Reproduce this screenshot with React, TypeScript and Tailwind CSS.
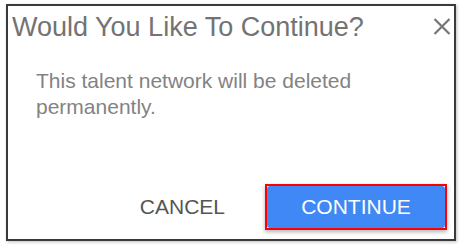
import React from "react";

export default function App() {
  return (
    <div className="w-[462px] h-[247px] bg-white overflow-hidden pt-[4px] pl-[6px]" style={{ fontFamily: '"Liberation Sans", Arial, sans-serif' }}>
      <div className="w-[450px] h-[237px] border-2 border-[#3a3a3a] bg-white flex flex-col shadow-[1px_1px_3px_rgba(0,0,0,0.25)]">
        <div className="flex justify-between items-start pt-[6px] pl-[4px] pr-[2px]">
          <h1 className="text-[27px] leading-[30px] text-[#737373]">Would You Like To Continue?</h1>
          <button className="mt-[5px] w-[20px] h-[18px] flex items-center justify-center">
            <svg width="18" height="17" viewBox="0 0 18 17">
              <path d="M1.5 1 L16.5 16 M16.5 1 L1.5 16" stroke="#767676" strokeWidth="2.2" fill="none" />
            </svg>
          </button>
        </div>
        <p className="mt-[26px] pl-[28px] text-[21px] leading-[26px] text-[#838383] w-[400px]">
          This talent network will be deleted permanently.
        </p>
        <div className="mt-auto flex justify-end items-center pr-[7px] pb-[9px]">
          <button className="text-[21px] leading-[26px] text-[#555555] mr-[40px]">CANCEL</button>
          <div className="w-[182px] h-[46px] border-2 border-[#ff0000] shadow-[0_2px_4px_rgba(0,0,0,0.3)]">
            <button className="w-full h-full bg-[#3f88f5] rounded-[3px] text-white text-[21px] leading-[26px] flex items-center justify-center">
              CONTINUE
            </button>
          </div>
        </div>
      </div>
    </div>
  );
}
